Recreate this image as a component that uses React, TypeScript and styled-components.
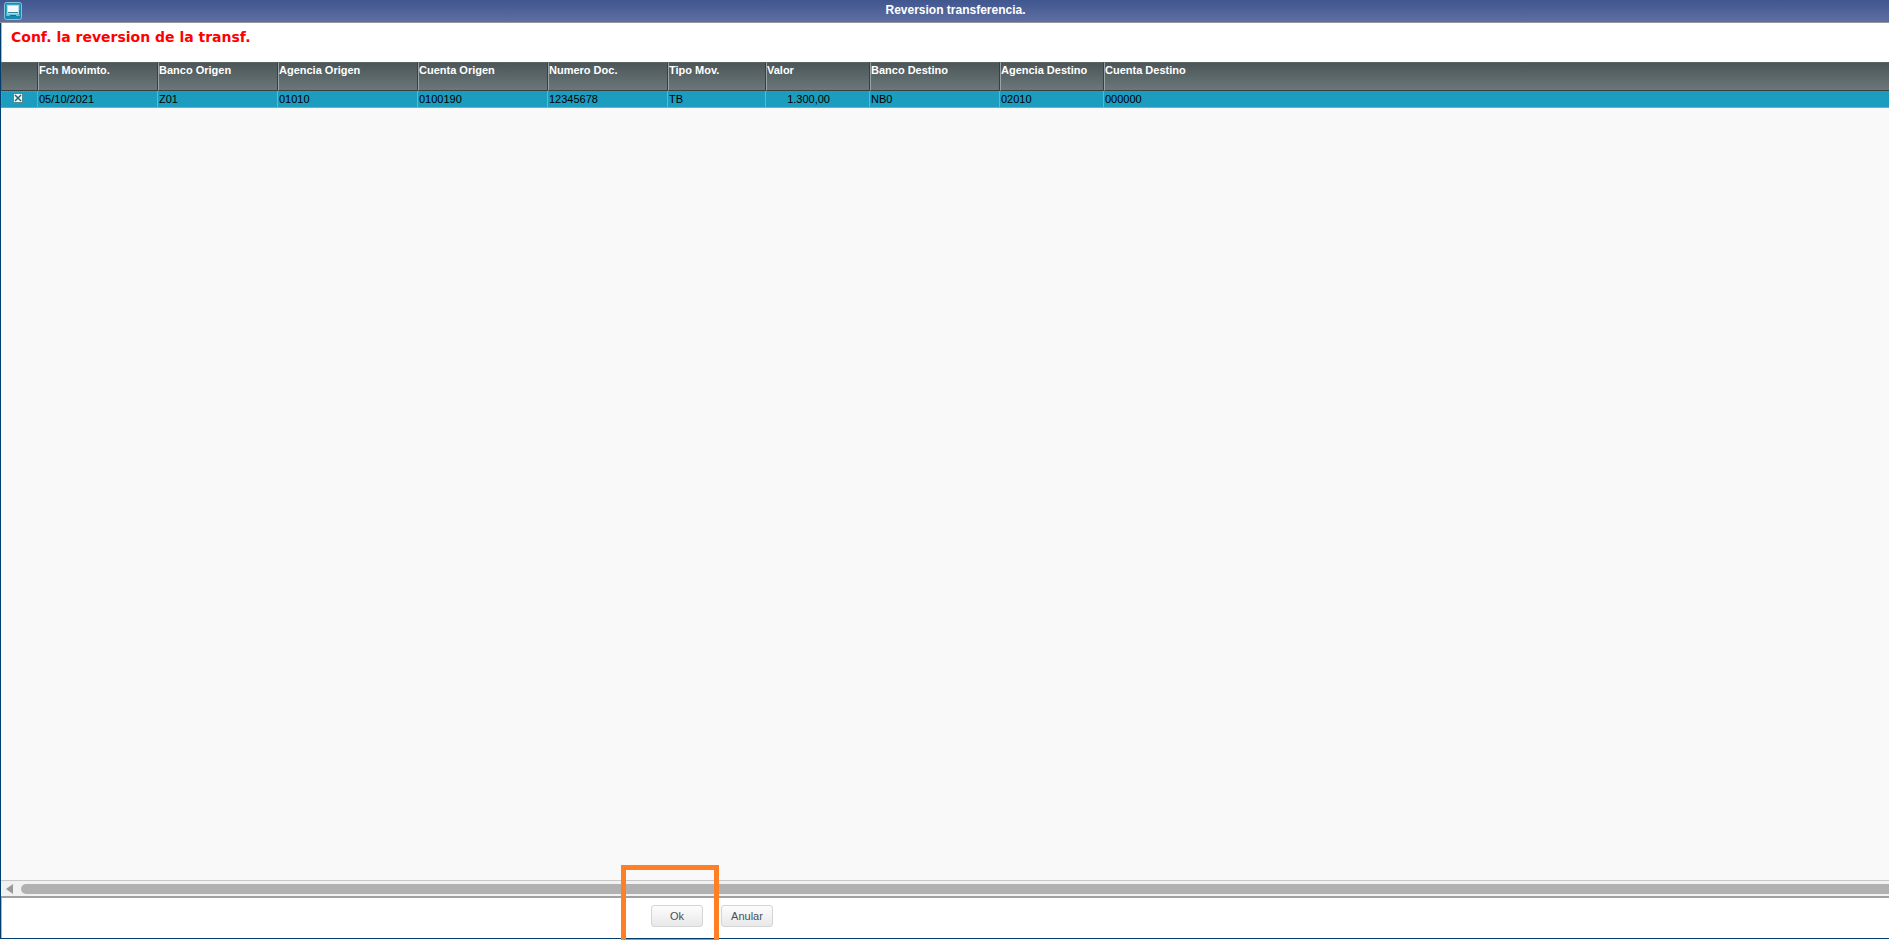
import React, { useState } from "react";
import styled, { createGlobalStyle } from "styled-components";

const Global = createGlobalStyle`
  *, *::after { box-sizing: border-box; }
  body { margin: 0; background: #fff; font-family: "Liberation Sans", Arial, sans-serif; }
`;

const Dialog = styled.div`
  display: flex;
  flex-direction: column;
  height: 100vh;
  overflow: hidden;
  padding-bottom: 1px;
`;

const TitleBar = styled.header`
  display: flex;
  align-items: center;
  flex: none;
  height: 23px;
  padding-left: 4px;
  border-bottom: 1px solid #94949c;
  background: linear-gradient(#40568f, #5f6fa3);
`;

const Title = styled.h1`
  flex: 1;
  margin: 0;
  padding-bottom: 2px;
  color: #fff;
  font-size: 12px;
  line-height: 14px;
  text-align: center;
`;

const Body = styled.main`
  display: flex;
  flex: 1;
  flex-direction: column;
  min-height: 0;
  border-left: 1px solid #003e70;
  border-bottom: 1px solid #003e70;
`;

const Message = styled.p`
  flex: none;
  height: 39px;
  margin: 0;
  padding: 6px 9px;
  border-left: 1px solid #b4b4b4;
  color: #f00;
  font: bold 14px/16px "DejaVu Sans", Verdana, sans-serif;
`;

const GridArea = styled.div`
  flex: 1;
  min-height: 0;
  background: #f9f9f9;
`;

const Grid = styled.table`
  width: 100%;
  table-layout: fixed;
  border-collapse: separate;
  border-spacing: 0;
  font-size: 11px;
  white-space: nowrap;
`;

const HeadCell = styled.th`
  height: 29px;
  padding: 1px 0 0;
  border: 1px solid #393f41;
  border-top-color: #5b6365;
  border-left-color: #9ca1a3;
  background: linear-gradient(#4c5658, #6b7779);
  color: #fff;
  line-height: 12px;
  text-align: left;
  vertical-align: top;
  &:first-child { border-left-color: #5b6365; }
  &:last-child { border-right: 0; }
`;

const Cell = styled.td<{ $numeric?: boolean }>`
  height: 17px;
  padding: 0 ${(p) => (p.$numeric ? "39px" : "0")} 0 1px;
  border: solid #8fa3ab;
  border-width: 0 1px 1px 0;
  background: #1c9dbf;
  color: #000;
  line-height: 16px;
  text-align: ${(p) => (p.$numeric ? "right" : "left")};
  &:last-child { border-right: 0; }
`;

const CheckCell = styled(Cell)`
  padding: 0;
  outline: 1px dotted #e0705a;
  outline-offset: -1px;
`;

const CheckBox = styled.label`
  display: grid;
  width: 10px;
  height: 10px;
  margin: 0 0 2px 12px;
  & > * { grid-area: 1 / 1; }
  input { width: 10px; height: 10px; margin: 0; appearance: none; background: #f4f7f7; }
  svg { pointer-events: none; }
  input:not(:checked) + svg path { display: none; }
`;

const ScrollTrack = styled.div`
  display: flex;
  align-items: center;
  flex: none;
  height: 18px;
  padding-left: 5px;
  gap: 8px;
  border-top: 1px solid #c4c8c6;
  border-bottom: 2px solid #a0a0a0;
  background: #f1f1f1;
`;

const ScrollArrow = styled.button`
  display: block;
  width: 7px;
  height: 10px;
  padding: 0;
  border: 0;
  background: none;
  svg { display: block; }
`;

const Thumb = styled.div`
  flex: 1;
  height: 10px;
  border-radius: 5px 0 0 5px;
  background: #b1b1b1;
`;

const Footer = styled.footer`
  display: flex;
  flex: none;
  gap: 18px;
  height: 40px;
  padding: 7px 0 0 649px;
  border-left: 1px solid #b4b4b4;
`;

const Highlighted = styled.div`
  position: relative;
  display: flex;
  height: 22px;
  &::after {
    content: "";
    position: absolute;
    top: -40px;
    left: -30px;
    width: 98px;
    height: 79px;
    border: 5px solid #ff7f27;
    pointer-events: none;
  }
`;

const Button = styled.button`
  width: 52px;
  height: 22px;
  padding: 0;
  border: 1px solid #d5d5d8;
  border-radius: 3px;
  background: linear-gradient(#fdfdfd, #e8e8e8);
  color: #4b4f5c;
  font: 11px/20px "Liberation Sans", Arial, sans-serif;
`;

const columns = [
  { name: "Fch Movimto.", width: 120, value: "05/10/2021" },
  { name: "Banco Origen", width: 120, value: "Z01" },
  { name: "Agencia Origen", width: 140, value: "01010" },
  { name: "Cuenta Origen", width: 130, value: "0100190" },
  { name: "Numero Doc.", width: 120, value: "12345678" },
  { name: "Tipo Mov.", width: 98, value: "TB" },
  { name: "Valor", width: 104, value: "1.300,00", numeric: true },
  { name: "Banco Destino", width: 130, value: "NB0" },
  { name: "Agencia Destino", width: 104, value: "02010" },
  { name: "Cuenta Destino", value: "000000" },
];

function WindowIcon() {
  return (
    <svg width="18" height="18" viewBox="0 0 18 18" aria-hidden="true">
      <rect x="0.5" y="0.5" width="17" height="17" rx="2" fill="#1689ad" stroke="#86c3d8" />
      <path d="M2 2h14v6q-7 1-14 6z" fill="#38a5c4" />
      <rect x="3.5" y="3.5" width="11" height="8" fill="#2387a5" stroke="#b4d9e3" />
      <rect x="4" y="4" width="10" height="6" fill="#f4f8fa" />
      <path d="M3 12h12l1 2H2z" fill="#78bdd0" />
      <path d="M6 13.5h6" stroke="#1b6e8b" />
    </svg>
  );
}

export default function App() {
  const [selected, setSelected] = useState(true);
  return (
    <>
      <Global />
      <Dialog>
        <TitleBar>
          <WindowIcon />
          <Title>Reversion transferencia.</Title>
        </TitleBar>
        <Body>
          <Message>Conf. la reversion de la transf.</Message>
          <GridArea>
            <Grid>
              <colgroup>
                <col width={37} />
                {columns.map((c) => <col key={c.name} width={c.width} />)}
              </colgroup>
              <thead>
                <tr>
                  <HeadCell aria-label="Seleccionar" />
                  {columns.map((c) => <HeadCell key={c.name} scope="col">{c.name}</HeadCell>)}
                </tr>
              </thead>
              <tbody>
                <tr>
                  <CheckCell>
                    <CheckBox>
                      <input
                        type="checkbox"
                        aria-label="Seleccionar"
                        checked={selected}
                        onChange={(e) => setSelected(e.target.checked)}
                      />
                      <svg width="10" height="10" viewBox="0 0 10 10" aria-hidden="true">
                        <rect x="0.5" y="0.5" width="9" height="9" fill="none" stroke="#5e8790" />
                        <path d="M2 2l6 6M8 2l-6 6" stroke="#1f6a70" strokeWidth="1.5" />
                      </svg>
                    </CheckBox>
                  </CheckCell>
                  {columns.map((c) => <Cell key={c.name} $numeric={c.numeric}>{c.value}</Cell>)}
                </tr>
              </tbody>
            </Grid>
          </GridArea>
          <ScrollTrack>
            <ScrollArrow type="button" aria-label="Desplazar a la izquierda">
              <svg width="7" height="10" viewBox="0 0 7 10"><path d="M0 5L7 0v10z" fill="#999" /></svg>
            </ScrollArrow>
            <Thumb />
          </ScrollTrack>
          <Footer>
            <Highlighted><Button type="button">Ok</Button></Highlighted>
            <Button type="button">Anular</Button>
          </Footer>
        </Body>
      </Dialog>
    </>
  );
}
